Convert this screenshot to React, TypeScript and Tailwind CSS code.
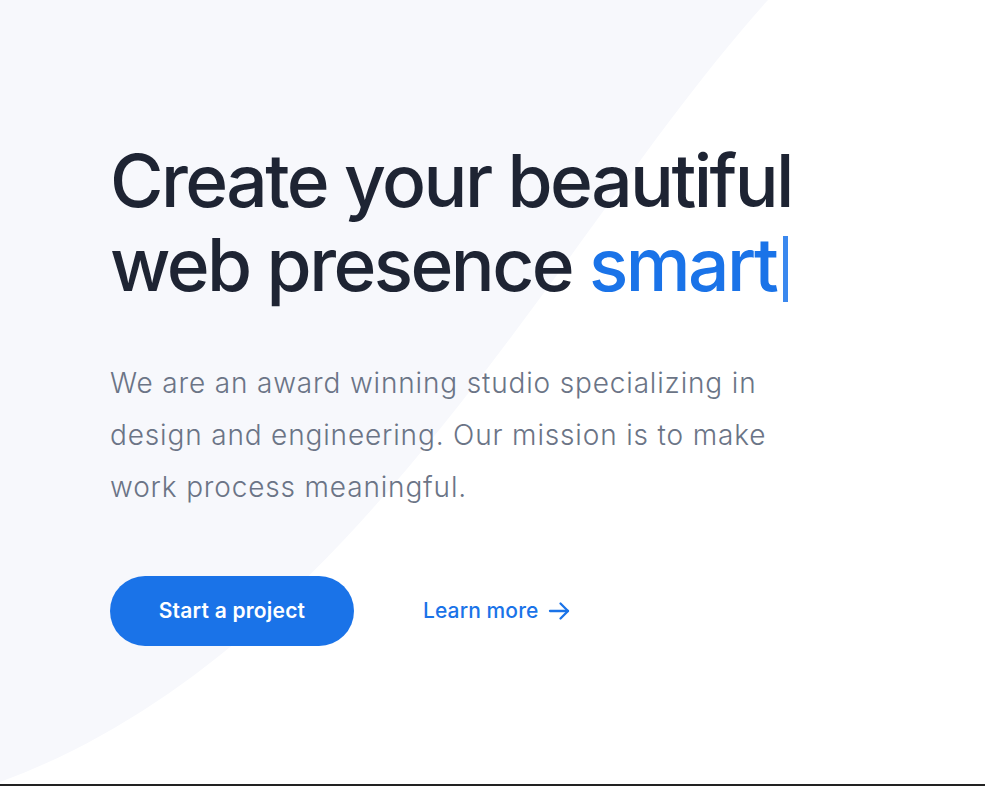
import React from 'react';

const Hero: React.FC = () => {
  return (
    <section className="relative h-[784px] w-full overflow-hidden bg-white">
      {/* soft background shape */}
      <svg
        className="absolute left-0 top-0 h-full w-full"
        viewBox="0 0 985 784"
        preserveAspectRatio="none"
        aria-hidden="true"
      >
        <path d="M0 0 H768 C560 230 360 650 0 782 Z" fill="#f7f8fc" />
      </svg>

      <div className="relative flex flex-col pl-[110px] pt-[139px]" style={{ fontFamily: 'Inter, "Noto Sans", sans-serif' }}>
        <h1 className="text-[73px] font-medium leading-[84px] tracking-[-0.035em] text-[#1e2433]">
          Create your beautiful
          <br />
          web presence{' '}
          <span className="text-[#1a73e8]">smart</span>
          <span className="ml-[7px] inline-block h-[66px] w-[5px] translate-y-[11px] bg-[#3b88ee]" />
        </h1>

        <p className="mt-[50px] w-[800px] text-[28px] font-light leading-[52px] tracking-[0.03em] text-[#6b7486]">
          We are an award winning studio specializing in
          <br />
          design and engineering. Our mission is to make
          <br />
          work process meaningful.
        </p>

        <div className="mt-[63px] flex items-center gap-[69px]">
          <button className="flex h-[70px] w-[244px] items-center justify-center rounded-full bg-[#1a73e8] text-[21px] font-semibold tracking-[0.01em] text-white">
            Start a project
          </button>
          <a href="#" className="flex items-center gap-[9px] text-[21px] font-medium tracking-[0.005em] text-[#1a73e8]">
            Learn more
            <svg width="24" height="24" viewBox="0 0 24 24" fill="none" stroke="currentColor" strokeWidth="2.3" strokeLinecap="round" strokeLinejoin="round">
              <path d="M3 12h18" />
              <path d="M13.5 4.5l7.5 7.5-7.5 7.5" />
            </svg>
          </a>
        </div>
      </div>
    </section>
  );
};

export default function App() {
  return (
    <div className="min-h-[786px] w-full bg-white">
      <Hero />
      <div className="h-[2px] w-full bg-[#222222]" />
    </div>
  );
}
